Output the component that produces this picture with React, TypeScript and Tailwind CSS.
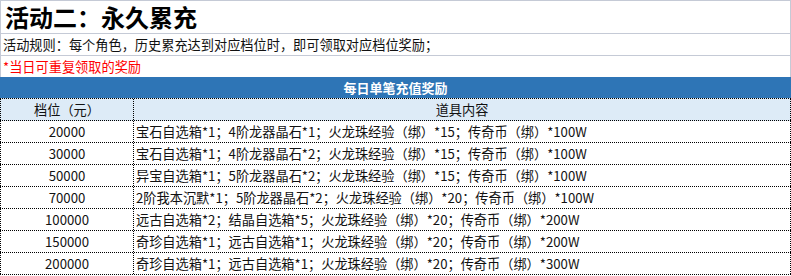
const rows: [string, string][] = [
  ["20000", "宝石自选箱*1；4阶龙器晶石*1；火龙珠经验（绑）*15；传奇币（绑）*100W"],
  ["30000", "宝石自选箱*1；4阶龙器晶石*2；火龙珠经验（绑）*15；传奇币（绑）*100W"],
  ["50000", "异宝自选箱*1；5阶龙器晶石*2；火龙珠经验（绑）*15；传奇币（绑）*100W"],
  ["70000", "2阶我本沉默*1；5阶龙器晶石*2；火龙珠经验（绑）*20；传奇币（绑）*100W"],
  ["100000", "远古自选箱*2；结晶自选箱*5；火龙珠经验（绑）*20；传奇币（绑）*200W"],
  ["150000", "奇珍自选箱*1；远古自选箱*1；火龙珠经验（绑）*20；传奇币（绑）*200W"],
  ["200000", "奇珍自选箱*1；远古自选箱*1；火龙珠经验（绑）*20；传奇币（绑）*300W"],
];

export default function App() {
  return (
    <div className="h-[276px] w-[791px] overflow-hidden bg-white font-['Noto_Sans_CJK_SC','Noto_Sans',sans-serif] text-[13.2px] leading-none text-[#111]">
      <div className="flex h-[34px] items-center border-x border-y border-[#c5cad6] pl-[4px] text-[24px] font-bold text-black">
        活动二：永久累充
      </div>
      <div className="flex h-[22px] items-center border-x border-b border-[#c5cad6] pl-[2px]">
        活动规则：每个角色，历史累充达到对应档位时，即可领取对应档位奖励；
      </div>
      <div className="flex h-[21px] items-center border-x border-[#c5cad6] pl-[2px] text-[#ff0000]">
        *当日可重复领取的奖励
      </div>
      <div className="flex h-[21px] items-center justify-center bg-[#2e75b6] text-[13px] font-bold text-white">
        每日单笔充值奖励
      </div>
      <div className="grid h-[23px] grid-cols-[134px_1fr] border-y border-dotted border-black bg-[#ddebf7]">
        <div className="flex items-center justify-center border-x border-dotted border-black">档位（元）</div>
        <div className="flex items-center justify-center border-r border-dotted border-black">道具内容</div>
      </div>
      {rows.map(([level, items]) => (
        <div key={level} className="grid h-[22px] grid-cols-[134px_1fr] border-b border-dotted border-black">
          <div className="flex items-center justify-center border-x border-dotted border-black">{level}</div>
          <div className="flex items-center border-r border-dotted border-black pl-[2px]">{items}</div>
        </div>
      ))}
    </div>
  );
}
